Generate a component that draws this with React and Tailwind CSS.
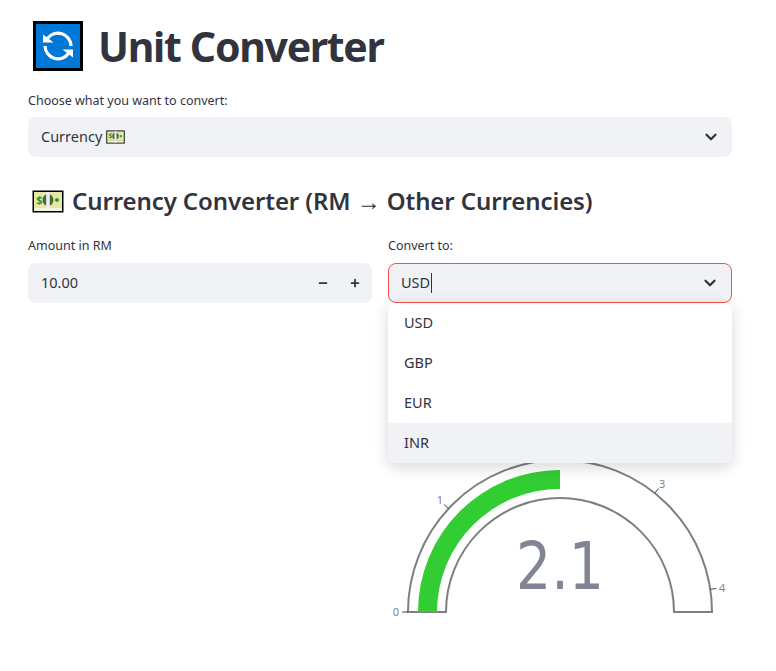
import { ChevronDown, Minus, Plus } from "lucide-react";

function ConvertIcon() {
  return (
    <svg width="50" height="50" viewBox="0 0 50 50" className="shrink-0">
      <rect x="1.5" y="1.5" width="47" height="47" fill="#0078d7" stroke="#000" strokeWidth="3" />
      <path d="M38 25A13 13 0 0 0 14.5 17.5" fill="none" stroke="#fff" strokeWidth="3.2" />
      <path d="M12 25A13 13 0 0 0 35.5 32.5" fill="none" stroke="#fff" strokeWidth="3.2" />
      <path d="M10 13.5V21.5H20.5z" fill="#fff" />
      <path d="M40 36.5V28.5H29.5z" fill="#fff" />
    </svg>
  );
}

function MoneyIcon({ w, h }) {
  return (
    <svg width={w} height={h} viewBox="0 0 32 23" className="shrink-0">
      <rect x="0.5" y="0.5" width="31" height="22" fill="#000" />
      <rect x="2" y="2" width="28" height="16" fill="#e4e9a8" />
      <rect x="2" y="18" width="28" height="3" fill="#f6f6dc" />
      <ellipse cx="16" cy="10" rx="5.5" ry="6" fill="#4d6b3a" />
      <rect x="14.2" y="2" width="3.6" height="19" fill="#eeeeee" />
      <circle cx="25" cy="10" r="2" fill="#2c9a2a" />
      <text x="7.5" y="14" textAnchor="middle" fontSize="11" fontWeight="700" fill="#1f9a2a">
        $
      </text>
    </svg>
  );
}

// angle is measured from the left end of the dial, value range 0 to 4.2
function polar(value, r) {
  const a = Math.PI - (value / 4.2) * Math.PI;
  return [152 + r * Math.cos(a), 152 - r * Math.sin(a)];
}

function Gauge() {
  // the 2 tick sits under the open menu
  const ticks = [0, 1, 3, 4];
  const [bx, by] = polar(2.1, 142);
  return (
    <svg width="344" height="170" viewBox="-20 -10 344 170" className="block">
      <path
        d="M0 152A152 152 0 0 1 304 152H266A114 114 0 0 0 38 152Z"
        fill="#fff"
        stroke="#7f7f7f"
        strokeWidth="2"
      />
      <path d={`M10 152A142 142 0 0 1 ${bx} ${by}V${152 - 123}A123 123 0 0 0 29 152Z`} fill="#32cd32" />
      {ticks.map((t) => {
        const [x1, y1] = polar(t, 152);
        const [x2, y2] = polar(t, 158);
        const [tx, ty] = polar(t, 164);
        return (
          <g key={t}>
            <line x1={x1} y1={y1} x2={x2} y2={y2} stroke="#444" strokeWidth="1" />
            <text x={tx} y={ty + 4} textAnchor="middle" fontSize="11" fill="#808495">
              {t}
            </text>
          </g>
        );
      })}
      <text
        x="152"
        y="129"
        textAnchor="middle"
        fontSize="66"
        fontFamily="'DejaVu Sans', sans-serif"
        textLength="88"
        lengthAdjust="spacingAndGlyphs"
        fill="#808495"
      >
        2.1
      </text>
    </svg>
  );
}

export default function App() {
  return (
    <div className="min-h-[671px] bg-white px-7 pt-[21px] text-[#31333f] font-['Noto_Sans',sans-serif]">
      <div className="flex w-[704px] flex-col">
        <div className="flex items-center gap-[15px] pl-[5px]">
          <ConvertIcon />
          <h1 className="text-[41px] leading-[50px] font-bold tracking-[-1.3px]">Unit Converter</h1>
        </div>

        <label className="mt-[20px] text-[12.5px] leading-[20px]">Choose what you want to convert:</label>
        <div className="mt-[6px] flex h-10 items-center justify-between rounded-lg bg-[#f0f2f6] pr-3 pl-[13px] text-[14.5px]">
          <div className="flex items-center gap-1">
            Currency <MoneyIcon w={19} h={14} />
          </div>
          <ChevronDown size={18} strokeWidth={3} />
        </div>

        <div className="mt-[27px] flex items-center gap-[8px] pl-1">
          <MoneyIcon w={32} h={23} />
          <h2 className="text-[24px] leading-[34px] font-semibold tracking-[-0.1px]">
            Currency Converter (RM <span className="font-['Liberation_Sans',sans-serif]">→</span> Other Currencies)
          </h2>
        </div>

        <div className="mt-[17px] grid grid-cols-2 gap-4">
          <div>
            <label className="block text-[12.5px] leading-[20px]">Amount in RM</label>
            <div className="mt-[7px] flex h-10 items-center justify-between rounded-lg bg-[#f0f2f6] pr-[11px] pl-[13px] text-[14.5px]">
              10.00
              <div className="flex items-center gap-5">
                <Minus size={12} strokeWidth={3.5} />
                <Plus size={12} strokeWidth={3.5} />
              </div>
            </div>
          </div>

          <div className="relative">
            <label className="block text-[12.5px] leading-[20px]">Convert to:</label>
            <div className="mt-[7px] flex h-10 items-center justify-between rounded-lg border border-[#ff4b4b] bg-[#f0f2f6] pr-3 pl-3 text-[14.5px]">
              <div className="flex items-center">
                USD
                <span className="ml-px h-[20px] w-px bg-[#31333f]" />
              </div>
              <ChevronDown size={18} strokeWidth={3} />
            </div>

            <ul className="absolute top-[67px] right-0 left-0 z-10 rounded-lg bg-white py-0 text-[14.5px] shadow-[0_4px_16px_rgba(0,0,0,0.16)]">
              <li className="flex h-10 items-center pl-4">USD</li>
              <li className="flex h-10 items-center pl-4">GBP</li>
              <li className="flex h-10 items-center pl-4">EUR</li>
              <li className="flex h-10 items-center rounded-b-lg bg-[#f0f2f6] pl-4">INR</li>
            </ul>

            <div className="mt-[147px]">
              <Gauge />
            </div>
          </div>
        </div>
      </div>
    </div>
  );
}
